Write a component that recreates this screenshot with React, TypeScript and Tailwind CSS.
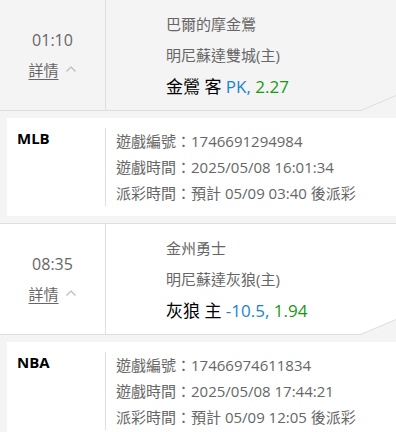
import React from "react";

type Item = {
  time: string;
  away: string;
  home: string;
  pickTeam: string;
  side: string;
  line: string;
  odds: string;
  league: string;
  id: string;
  gameTime: string;
  payout: string;
  headerBg: string;
};

const items: Item[] = [
  {
    time: "01:10",
    away: "巴爾的摩金鶯",
    home: "明尼蘇達雙城(主)",
    pickTeam: "金鶯",
    side: "客",
    line: "PK,",
    odds: "2.27",
    league: "MLB",
    id: "1746691294984",
    gameTime: "2025/05/08 16:01:34",
    payout: "預計 05/09 03:40 後派彩",
    headerBg: "bg-[#f4f4f4]",
  },
  {
    time: "08:35",
    away: "金州勇士",
    home: "明尼蘇達灰狼(主)",
    pickTeam: "灰狼",
    side: "主",
    line: "-10.5,",
    odds: "1.94",
    league: "NBA",
    id: "17466974611834",
    gameTime: "2025/05/08 17:44:21",
    payout: "預計 05/09 12:05 後派彩",
    headerBg: "bg-white",
  },
];

function Card({ it }: { it: Item }) {
  return (
    <div>
      <div
        className={`relative flex h-[112px] border-y border-[#dedede] ${it.headerBg}`}
      >
        <div className="flex w-[106px] shrink-0 flex-col items-center border-r border-[#dedede] pt-[30px]">
          <div className="text-[16px] leading-[20px] text-[#666]">{it.time}</div>
          <div className="mt-[10px] flex items-center text-[15px] leading-[20px] text-[#666]">
            <span className="underline underline-offset-[3px] decoration-[#666]">
              詳情{" "}
            </span>
            <svg width="12" height="8" viewBox="0 0 12 8" className="ml-[6px] mb-[2px]">
              <polyline
                points="1.5,6.5 6,2 10.5,6.5"
                fill="none"
                stroke="#c4c4c4"
                strokeWidth="1.5"
              />
            </svg>
          </div>
        </div>
        <div className="flex flex-col pl-[60px] pt-[9px]">
          <div className="text-[15px] leading-[31px] text-[#666]">{it.away}</div>
          <div className="text-[15px] leading-[31px] text-[#666]">{it.home}</div>
          <div className="text-[17px] leading-[31px] text-black">
            {it.pickTeam} {it.side}{" "}
            <span className="text-[#1a84cf]">{it.line}</span>{" "}
            <span className="text-[#159a15]">{it.odds}</span>
          </div>
        </div>
        <svg
          width="35"
          height="16"
          viewBox="0 0 35 16"
          className="absolute right-0 bottom-[-1px]"
        >
          <polygon points="0,16 35,1 35,16" fill="#f4f4f4" />
          <polygon points="0,14.5 35,0 35,1 0,16" fill="#f4f4f4" />
          <line x1="0" y1="15.5" x2="35" y2="0.5" stroke="#dedede" strokeWidth="1" />
        </svg>
      </div>
      <div className="h-[7px]" />
      <div className="ml-[7px] flex bg-white pt-[10px] pb-[10px]">
        <div className="w-[98px] shrink-0 pl-[10px] text-[15px] font-bold leading-[20px] text-black">
          {it.league}
        </div>
        <div className="border-l border-[#dedede] pl-[10px] text-[15px] leading-[26px] text-[#666]">
          <div>遊戲編號：{it.id}</div>
          <div>遊戲時間：{it.gameTime}</div>
          <div>派彩時間：{it.payout}</div>
        </div>
      </div>
      <div className="h-[7px]" />
    </div>
  );
}

export default function App() {
  return (
    <div
      className="h-[432px] w-[396px] overflow-hidden bg-[#f4f4f4]"
      style={{ fontFamily: '"Open Sans", "Noto Sans CJK TC", sans-serif' }}
    >
      <div className="-mt-px">
        {items.map((it) => (
          <Card key={it.id} it={it} />
        ))}
      </div>
    </div>
  );
}
